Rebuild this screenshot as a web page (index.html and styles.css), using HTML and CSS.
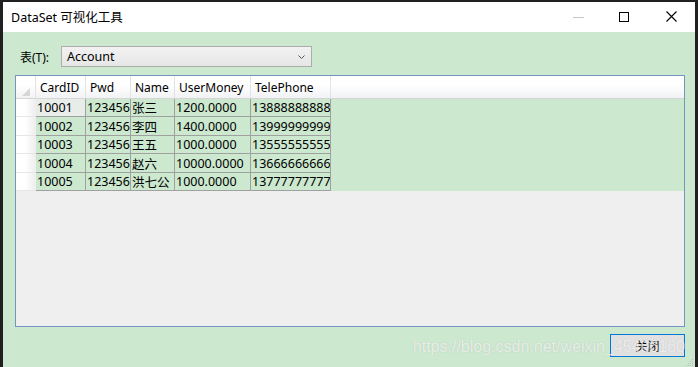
FILE: index.html
```html
<!DOCTYPE html>
<html lang="zh-CN">
<head>
    <meta charset="UTF-8">
    <title>DataSet 可视化工具</title>
    <link rel="stylesheet" href="styles.css">
</head>
<body>
    <div class="window">
        <div class="titlebar">
            <span class="title">DataSet 可视化工具</span>
            <div class="controls">
                <span class="ctl min"><svg width="11" height="1"><rect width="11" height="1" fill="#c7c7c7"/></svg></span>
                <span class="ctl max"><svg width="10" height="10"><rect x="0.5" y="0.5" width="9" height="9" fill="none" stroke="#000"/></svg></span>
                <span class="ctl close"><svg width="11" height="11"><path d="M0.5 0.5L10.5 10.5M10.5 0.5L0.5 10.5" stroke="#000" stroke-width="1.1"/></svg></span>
            </div>
        </div>

        <div class="content">
            <div class="toolbar">
                <label class="tableLabel">表(T):</label>
                <div class="combo">
                    <span>Account</span>
                    <svg class="chevron" width="7" height="4"><path d="M0.5 0.5L3.5 3.5L6.5 0.5" fill="none" stroke="#555"/></svg>
                </div>
            </div>

            <div class="grid">
                <div class="gridHead">
                    <div class="corner"><svg width="8" height="8"><path d="M8 0L8 8L0 8Z" fill="#d6d6d6"/></svg></div>
                    <div class="hcell c1">CardID</div>
                    <div class="hcell c2">Pwd</div>
                    <div class="hcell c3">Name</div>
                    <div class="hcell c4">UserMoney</div>
                    <div class="hcell c5">TelePhone</div>
                    <div class="hfill"></div>
                </div>
                <div class="row">
                    <div class="rhead"></div>
                    <div class="cell c1 current">10001</div>
                    <div class="cell c2">123456</div>
                    <div class="cell c3">张三</div>
                    <div class="cell c4">1200.0000</div>
                    <div class="cell c5">13888888888</div>
                    <div class="rfill"></div>
                </div>
                <div class="row">
                    <div class="rhead"></div>
                    <div class="cell c1">10002</div>
                    <div class="cell c2">123456</div>
                    <div class="cell c3">李四</div>
                    <div class="cell c4">1400.0000</div>
                    <div class="cell c5">13999999999</div>
                    <div class="rfill"></div>
                </div>
                <div class="row">
                    <div class="rhead"></div>
                    <div class="cell c1">10003</div>
                    <div class="cell c2">123456</div>
                    <div class="cell c3">王五</div>
                    <div class="cell c4">1000.0000</div>
                    <div class="cell c5">13555555555</div>
                    <div class="rfill"></div>
                </div>
                <div class="row">
                    <div class="rhead"></div>
                    <div class="cell c1">10004</div>
                    <div class="cell c2">123456</div>
                    <div class="cell c3">赵六</div>
                    <div class="cell c4">10000.0000</div>
                    <div class="cell c5">13666666666</div>
                    <div class="rfill"></div>
                </div>
                <div class="row">
                    <div class="rhead"></div>
                    <div class="cell c1">10005</div>
                    <div class="cell c2">123456</div>
                    <div class="cell c3">洪七公</div>
                    <div class="cell c4">1000.0000</div>
                    <div class="cell c5">13777777777</div>
                    <div class="rfill"></div>
                </div>
            </div>

            <div class="footer">
                <button class="closeBtn">关闭</button>
                <span class="watermark">https://blog.csdn.net/weixin_45406160</span>
                <svg class="grip" width="9" height="9">
                    <rect x="7" y="1" width="1" height="1" fill="#bcbcbc"/>
                    <rect x="5" y="3" width="1" height="1" fill="#bcbcbc"/><rect x="7" y="3" width="1" height="1" fill="#bcbcbc"/>
                    <rect x="3" y="5" width="1" height="1" fill="#bcbcbc"/><rect x="5" y="5" width="1" height="1" fill="#bcbcbc"/><rect x="7" y="5" width="1" height="1" fill="#bcbcbc"/>
                    <rect x="1" y="7" width="1" height="1" fill="#bcbcbc"/><rect x="3" y="7" width="1" height="1" fill="#bcbcbc"/><rect x="5" y="7" width="1" height="1" fill="#bcbcbc"/><rect x="7" y="7" width="1" height="1" fill="#bcbcbc"/>
                </svg>
            </div>
        </div>
    </div>
</body>
</html>
```

FILE: styles.css
```css
body{
    margin: 0;
    background-color: #202020;
    font-family: "Noto Sans", "Noto Sans CJK SC", sans-serif;
    color: #000;
    height: 367px;
    overflow: hidden;
}

.window{
    margin: 2px 3px 0 3px;
    width: 692px;
    height: 365px;
    display: flex;
    flex-direction: column;
}

.titlebar{
    height: 30px;
    background-color: #fff;
    display: flex;
    align-items: center;
    justify-content: space-between;
}

.titlebar .title{
    padding-left: 8px;
    font-size: 12.5px;
    margin-top: -1px;
}

.controls{
    display: flex;
    align-items: center;
    height: 100%;
}

.ctl{
    width: 46px;
    display: flex;
    justify-content: center;
    align-items: center;
    margin-top: -1px;
}

.ctl.min{
    margin-top: 0;
}

.ctl.close{
    width: 48px;
}

.content{
    flex: 1;
    background-color: #cce8cf;
    padding: 14px 10px 0 12px;
    display: flex;
    flex-direction: column;
}

.toolbar{
    display: flex;
    align-items: center;
    height: 21px;
    padding-left: 5px;
}

.tableLabel{
    font-size: 12px;
    width: 41px;
}

.combo{
    width: 238px;
    height: 19px;
    border: 1px solid #adadad;
    background: linear-gradient(#f2f2f2, #e6e6e6);
    display: flex;
    align-items: center;
    justify-content: space-between;
    padding: 0 6px 0 5px;
    font-size: 12.5px;
}

.chevron{
    margin-top: 1px;
}

.grid{
    margin-top: 8px;
    height: 250px;
    border: 1px solid #7595c0;
    background-color: #efefef;
    font-size: 12px;
}

.gridHead{
    display: flex;
    height: 22px;
    border-bottom: 1px solid #d5d5d5;
    background: linear-gradient(#fff 40%, #f1f2f4);
}

.corner{
    width: 20px;
    display: flex;
    align-items: flex-end;
    justify-content: center;
    padding-bottom: 2px;
    box-sizing: border-box;
    border-right: 1px solid #e3e3e3;
}

.hcell{
    display: flex;
    align-items: center;
    padding-left: 4px;
    box-sizing: border-box;
    border-right: 1px solid #e3e3e3;
    white-space: nowrap;
}

.hfill{
    flex: 1;
}

.c1{ width: 50px; }
.c2{ width: 45px; }
.c3{ width: 44px; }
.c4{ width: 76px; }
.c5{ width: 80px; }

.row{
    display: flex;
    height: 18px;
    background-color: #cce8cf;
}

.row:nth-child(odd){
    height: 19px;
}

.rhead{
    width: 20px;
    background: linear-gradient(to right, #fff 45%, #ededed);
    border-bottom: 1px solid #e6e6e6;
    box-sizing: border-box;
}

.cell{
    display: flex;
    align-items: center;
    padding-left: 1px;
    box-sizing: border-box;
    border-right: 1px solid #a0a0a0;
    border-bottom: 1px solid #a0a0a0;
    white-space: nowrap;
    overflow: hidden;
    font-size: 12.5px;
}

.cell.current{
    background-color: #e9ede9;
}

.rfill{
    flex: 1;
}

.footer{
    position: relative;
    flex: 1;
    display: flex;
    justify-content: flex-end;
    align-items: flex-start;
    padding-top: 7px;
}

.closeBtn{
    width: 75px;
    height: 23px;
    border: 1px solid #0078d7;
    background-color: #e1e1e1;
    font-family: "Noto Sans CJK SC", sans-serif;
    font-size: 12px;
    padding: 0;
    color: #000;
}

.watermark{
    position: absolute;
    right: 0;
    top: 11px;
    font-family: "Liberation Sans", sans-serif;
    font-size: 16px;
    color: rgba(255, 255, 255, 0.7);
    text-shadow: 0 0 1px rgba(120, 120, 120, 0.35);
    white-space: nowrap;
}

.grip{
    position: absolute;
    right: -9px;
    bottom: 0;
}
```
